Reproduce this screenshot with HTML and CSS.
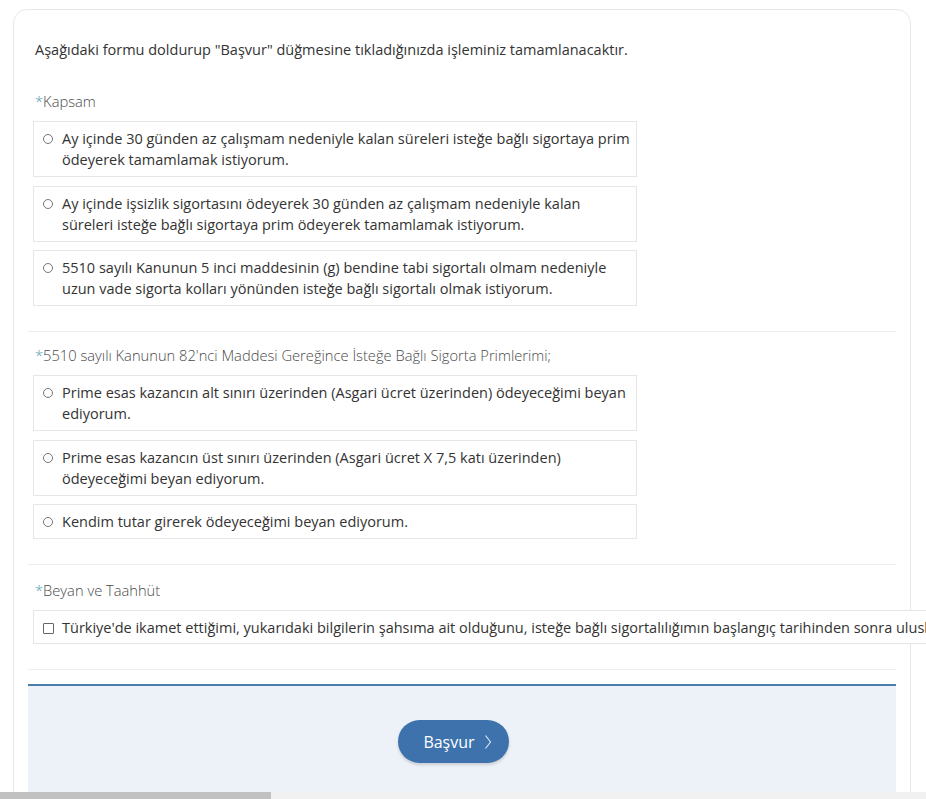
FILE: index.html
```html
<!DOCTYPE html>
<html lang="tr">
<head>
    <meta charset="UTF-8">
    <meta name="viewport" content="width=device-width, initial-scale=1.0">
    <title>İsteğe Bağlı Sigorta Başvurusu</title>
    <link rel="stylesheet" href="styles.css">
</head>
<body>
    <div class="viewport">
        <div class="screen">
            <div class="card">
                <p class="intro">Aşağıdaki formu doldurup "Başvur" düğmesine tıkladığınızda işleminiz tamamlanacaktır.</p>

                <div class="section">
                    <div class="group-label"><span class="req">*</span>Kapsam</div>
                    <label class="option">
                        <span class="radio"></span>
                        <span class="option-text">Ay içinde 30 günden az çalışmam nedeniyle kalan süreleri isteğe bağlı sigortaya prim ödeyerek tamamlamak istiyorum.</span>
                    </label>
                    <label class="option">
                        <span class="radio"></span>
                        <span class="option-text">Ay içinde işsizlik sigortasını ödeyerek 30 günden az çalışmam nedeniyle kalan süreleri isteğe bağlı sigortaya prim ödeyerek tamamlamak istiyorum.</span>
                    </label>
                    <label class="option">
                        <span class="radio"></span>
                        <span class="option-text">5510 sayılı Kanunun 5 inci maddesinin (g) bendine tabi sigortalı olmam nedeniyle uzun vade sigorta kolları yönünden isteğe bağlı sigortalı olmak istiyorum.</span>
                    </label>
                </div>

                <div class="section">
                    <div class="group-label"><span class="req">*</span>5510 sayılı Kanunun 82'nci Maddesi Gereğince İsteğe Bağlı Sigorta Primlerimi;</div>
                    <label class="option">
                        <span class="radio"></span>
                        <span class="option-text">Prime esas kazancın alt sınırı üzerinden (Asgari ücret üzerinden) ödeyeceğimi beyan ediyorum.</span>
                    </label>
                    <label class="option">
                        <span class="radio"></span>
                        <span class="option-text">Prime esas kazancın üst sınırı üzerinden (Asgari ücret X 7,5 katı üzerinden) ödeyeceğimi beyan ediyorum.</span>
                    </label>
                    <label class="option">
                        <span class="radio"></span>
                        <span class="option-text">Kendim tutar girerek ödeyeceğimi beyan ediyorum.</span>
                    </label>
                </div>

                <div class="section section-last">
                    <div class="group-label"><span class="req">*</span>Beyan ve Taahhüt</div>
                    <label class="option option-wide">
                        <span class="check"></span>
                        <span class="option-text">Türkiye'de ikamet ettiğimi, yukarıdaki bilgilerin şahsıma ait olduğunu, isteğe bağlı sigortalılığımın başlangıç tarihinden sonra uluslararası sosyal güvenlik sözleşmesi bulunan bir ülkede çalışmadığımı ve bu beyanımın doğru olmaması halinde doğacak sonuçlardan sorumlu olacağımı kabul ve taahhüt ediyorum.</span>
                    </label>
                </div>

                <div class="actions">
                    <button class="btn-apply">Başvur
                        <svg width="8" height="16" viewBox="0 0 8 16"><polyline points="1.5,1.5 6.5,8 1.5,14.5" fill="none" stroke="#d4e3f3" stroke-width="1.2"/></svg>
                    </button>
                </div>
            </div>
        </div>
        <div class="hscroll"><div class="hscroll-thumb"></div></div>
    </div>
</body>
</html>
```

FILE: styles.css
```css
body {
    margin: 0;
    font-family: "Open Sans", Arial, sans-serif;
    color: #333;
    background: #fff;
}
.viewport {
    height: 799px;
    display: flex;
    flex-direction: column;
}
.screen {
    flex: 1;
    overflow: hidden;
    padding: 9px 15px 0 13px;
}
.card {
    border: 1px solid #e8e8e8;
    border-radius: 14px;
    padding: 0 14px;
    min-height: 900px;
}
.intro {
    margin: 0;
    padding: 29px 7px 0;
    font-size: 14.5px;
    line-height: 21px;
}
.section {
    padding: 0 5px 25px;
    border-bottom: 1px solid #efefef;
    margin-top: 13px;
}
.intro + .section {
    margin-top: 31px;
}
.section-last {
    margin-top: 15px;
}
.group-label {
    font-size: 14.7px;
    font-weight: 300;
    color: #4a4a4a;
    line-height: 20px;
    padding-left: 2px;
    margin-bottom: 10px;
}
.req {
    color: #4f9bb5;
}
.option {
    display: flex;
    align-items: flex-start;
    width: 604px;
    box-sizing: border-box;
    padding: 6px 4px 6px 9px;
    border: 1px solid #e6e6e6;
    background: #fff;
    font-size: 14.5px;
    line-height: 21px;
    margin-bottom: 8.5px;
    cursor: pointer;
}
.option:last-child {
    margin-bottom: 0;
}
.radio {
    flex: none;
    width: 8px;
    height: 8px;
    border: 1px solid #777;
    border-radius: 50%;
    margin: 6px 9px 0 0;
}
.check {
    flex: none;
    width: 9px;
    height: 9px;
    border: 1px solid #666;
    border-radius: 1px;
    margin: 6px 8px 0 0;
}
.option-wide {
    width: auto;
    margin-right: -600px;
    padding-top: 6px;
    padding-bottom: 5px;
    white-space: nowrap;
}
.option-wide .option-text {
    flex: none;
}
.actions {
    margin-top: 14px;
    border-top: 2px solid #4b7da8;
    background: #edf1f8;
    height: 200px;
    padding: 34px 17px 0 0;
    display: flex;
    justify-content: center;
}
.btn-apply {
    align-self: flex-start;
    display: flex;
    align-items: center;
    gap: 9px;
    height: 43px;
    padding: 0 17px 0 25px;
    border: none;
    border-radius: 22px;
    background: #3d72ad;
    color: #fff;
    font-family: "Open Sans", Arial, sans-serif;
    font-size: 16px;
    box-shadow: 0 2px 3px rgba(0, 0, 0, 0.15);
    cursor: pointer;
}
.hscroll {
    height: 7px;
    background: #f1f1f1;
}
.hscroll-thumb {
    width: 271px;
    height: 100%;
    background: #c1c1c1;
}
```
